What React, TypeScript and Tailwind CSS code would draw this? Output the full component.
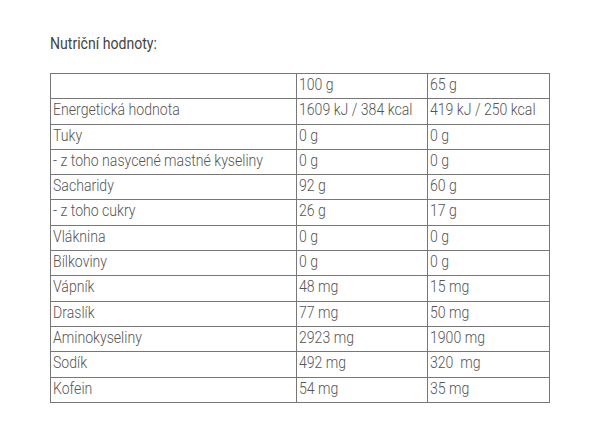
const rows: [string, string, string][] = [
  ['', '100 g', '65 g'],
  ['Energetická hodnota', '1609 kJ / 384 kcal', '419 kJ / 250 kcal'],
  ['Tuky', '0 g', '0 g'],
  ['- z toho nasycené mastné kyseliny', '0 g', '0 g'],
  ['Sacharidy', '92 g', '60 g'],
  ['- z toho cukry', '26 g', '17 g'],
  ['Vláknina', '0 g', '0 g'],
  ['Bílkoviny', '0 g', '0 g'],
  ['Vápník', '48 mg', '15 mg'],
  ['Draslík', '77 mg', '50 mg'],
  ['Aminokyseliny', '2923 mg', '1900 mg'],
  ['Sodík', '492 mg', '320  mg'],
  ['Kofein', '54 mg', '35 mg'],
]

export default function App() {
  return (
    <div className="w-[600px] h-[440px] bg-white pl-[50px] pt-[34px] font-['Roboto',sans-serif]">
      <h2 className="text-[16px] leading-[20px] text-[#444] font-normal">
        <span className="inline-block origin-left scale-x-[0.88] whitespace-nowrap">Nutriční hodnoty:</span>
      </h2>
      <table className="mt-[19px] w-[499px] border-collapse table-fixed text-[16px] font-light text-[#555]">
        <colgroup>
          <col className="w-[246px]" />
          <col className="w-[131px]" />
          <col className="w-[122px]" />
        </colgroup>
        <tbody>
          {rows.map((r, i) => (
            <tr key={i} className="h-[25.3px]">
              {r.map((c, j) => (
                <td key={j} className="border border-[#777] px-[2px] pt-[1px] pb-0 align-top whitespace-pre leading-[20px] overflow-hidden">
                  <span className="inline-block origin-left scale-x-[0.88]">{c}</span>
                </td>
              ))}
            </tr>
          ))}
        </tbody>
      </table>
    </div>
  )
}
